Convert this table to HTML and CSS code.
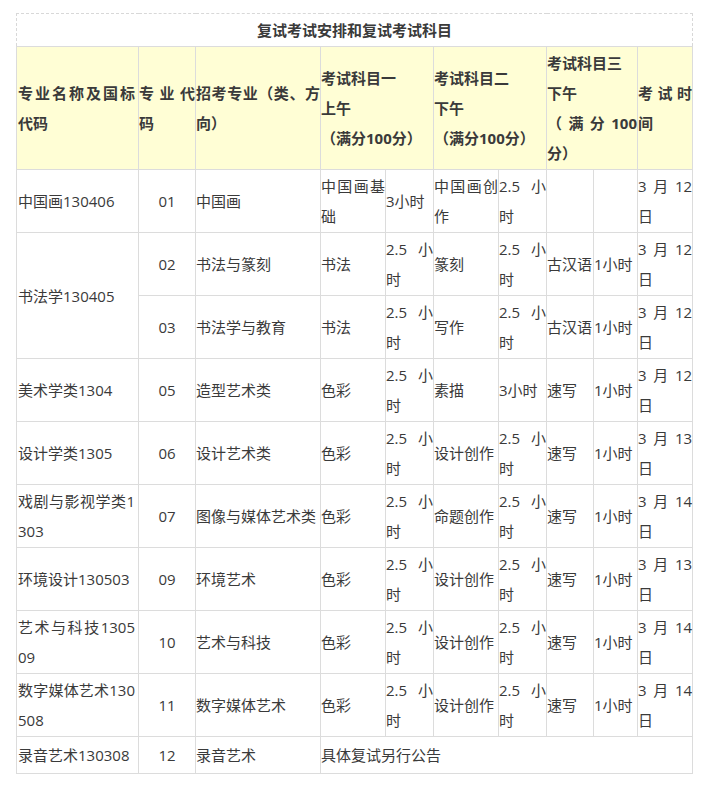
FILE: index.html
```html
<!DOCTYPE html>
<html lang="zh-CN">
<head>
<meta charset="utf-8">
<title>复试考试安排和复试考试科目</title>
<link rel="stylesheet" href="styles.css">
</head>
<body>
<div class="page">
<table class="schedule">
  <colgroup>
    <col class="c1"><col class="c2"><col class="c3"><col class="c4"><col class="c5">
    <col class="c6"><col class="c7"><col class="c8"><col class="c9"><col class="c10">
  </colgroup>
  <tr class="title-row"><td colspan="10" class="title">复试考试安排和复试考试科目</td></tr>
  <tr class="head">
    <td class="name">专业名称及国标代码</td>
    <td>专业代码</td>
    <td>招考专业（类、方向）</td>
    <td colspan="2">考试科目一<br>上午<br>（满分100分）</td>
    <td colspan="2">考试科目二<br>下午<br>（满分100分）</td>
    <td colspan="2">考试科目三<br>下午<br>（满分100分）</td>
    <td>考试时间</td>
  </tr>
  <tr class="row">
    <td class="name">中国画130406</td><td class="code">01</td><td>中国画</td>
    <td>中国画基础</td><td>3小时</td><td>中国画创作</td><td>2.5小时</td>
    <td></td><td></td><td>3月12日</td>
  </tr>
  <tr class="row">
    <td class="name" rowspan="2">书法学130405</td><td class="code">02</td><td>书法与篆刻</td>
    <td>书法</td><td>2.5小时</td><td>篆刻</td><td>2.5小时</td>
    <td>古汉语</td><td>1小时</td><td>3月12日</td>
  </tr>
  <tr class="row">
    <td class="code">03</td><td>书法学与教育</td>
    <td>书法</td><td>2.5小时</td><td>写作</td><td>2.5小时</td>
    <td>古汉语</td><td>1小时</td><td>3月12日</td>
  </tr>
  <tr class="row">
    <td class="name">美术学类1304</td><td class="code">05</td><td>造型艺术类</td>
    <td>色彩</td><td>2.5小时</td><td>素描</td><td>3小时</td>
    <td>速写</td><td>1小时</td><td>3月12日</td>
  </tr>
  <tr class="row">
    <td class="name">设计学类1305</td><td class="code">06</td><td>设计艺术类</td>
    <td>色彩</td><td>2.5小时</td><td>设计创作</td><td>2.5小时</td>
    <td>速写</td><td>1小时</td><td>3月13日</td>
  </tr>
  <tr class="row">
    <td class="name">戏剧与影视学类1303</td><td class="code">07</td><td>图像与媒体艺术类</td>
    <td>色彩</td><td>2.5小时</td><td>命题创作</td><td>2.5小时</td>
    <td>速写</td><td>1小时</td><td>3月14日</td>
  </tr>
  <tr class="row">
    <td class="name">环境设计130503</td><td class="code">09</td><td>环境艺术</td>
    <td>色彩</td><td>2.5小时</td><td>设计创作</td><td>2.5小时</td>
    <td>速写</td><td>1小时</td><td>3月13日</td>
  </tr>
  <tr class="row">
    <td class="name">艺术与科技130509</td><td class="code">10</td><td>艺术与科技</td>
    <td>色彩</td><td>2.5小时</td><td>设计创作</td><td>2.5小时</td>
    <td>速写</td><td>1小时</td><td>3月14日</td>
  </tr>
  <tr class="row">
    <td class="name">数字媒体艺术130508</td><td class="code">11</td><td>数字媒体艺术</td>
    <td>色彩</td><td>2.5小时</td><td>设计创作</td><td>2.5小时</td>
    <td>速写</td><td>1小时</td><td>3月14日</td>
  </tr>
  <tr class="row-last">
    <td class="name">录音艺术130308</td><td class="code">12</td><td>录音艺术</td>
    <td colspan="7">具体复试另行公告</td>
  </tr>
</table>
</div>
</body>
</html>
```
FILE: styles.css
```css
html, body {
  margin: 0;
  padding: 0;
  background: #ffffff;
}
.page {
  padding: 13px 0 0 16px;
}
.schedule {
  border-collapse: collapse;
  table-layout: fixed;
  width: 677px;
  font-family: "Open Sans", "Noto Sans CJK SC", sans-serif;
  font-size: 15px;
  line-height: 30px;
  color: #3a3a3a;
}
.c1 { width: 122px; }
.c2 { width: 57px; }
.c3 { width: 125px; }
.c4 { width: 65px; }
.c5 { width: 48px; }
.c6 { width: 65px; }
.c7 { width: 48px; }
.c8 { width: 47px; }
.c9 { width: 44px; }
.c10 { width: 55px; }
.schedule td {
  border: 1px solid #dcdcdc;
  padding: 1px 0;
  vertical-align: middle;
  text-align: justify;
  word-break: break-all;
}
.schedule td.name {
  padding: 1px 3px 1px 1px;
}
.schedule td.title {
  border: 1px dashed #d8d8d8;
  text-align: center;
  font-weight: bold;
  height: 30px;
}
.head td {
  background: #fffed5;
  font-weight: bold;
}
.head { height: 123px; }
.row { height: 63px; }
.row-last { height: 37px; }
.schedule td.code {
  text-align: center;
}
```
